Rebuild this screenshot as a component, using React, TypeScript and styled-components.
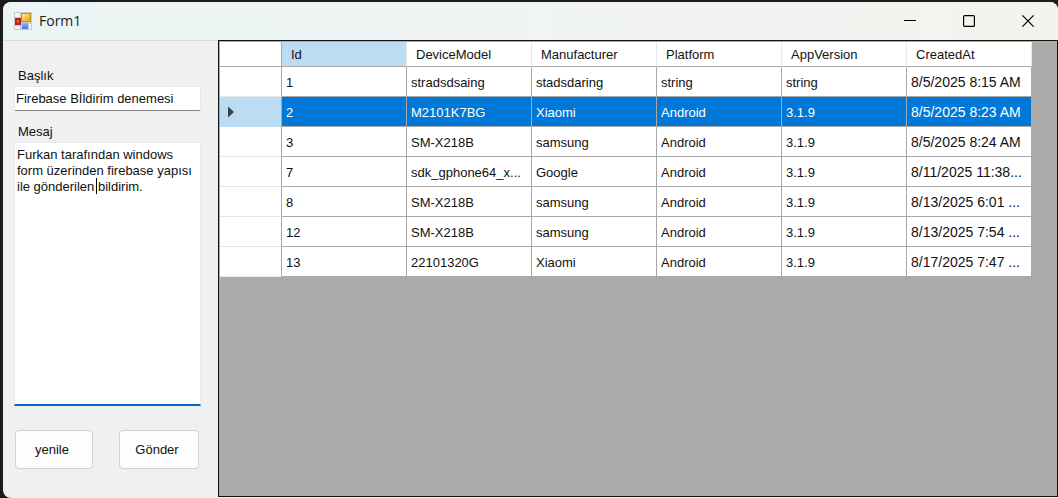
import React, { useState } from "react";
import styled, { createGlobalStyle } from "styled-components";

const GlobalStyle = createGlobalStyle`
  * { box-sizing: border-box; }
  body {
    margin: 0;
    background: #1d1b1c;
    font-family: "Liberation Sans", Arial, sans-serif;
    font-size: 13px;
    color: #111;
  }
  button, input, textarea { font: inherit; color: inherit; }
`;

const Desktop = styled.div`
  display: flex;
  min-height: 100vh;
  padding: 2px 0 0 3px;
`;

const Window = styled.div`
  display: flex;
  flex-direction: column;
  flex: 1;
  min-width: 0;
  overflow: hidden;
  border-radius: 8px;
  border-bottom-right-radius: 0;
  background: #f0f0f0;
`;

const TitleBar = styled.header`
  display: flex;
  align-items: center;
  height: 38px;
  padding: 0 1px 0 11px;
  background: linear-gradient(90deg, #ebf5f5, #f0f4f3 50%, #f4f3ee);
`;

const Title = styled.h1`
  flex: 1;
  margin: 0 0 0 7px;
  font: 400 14px/20px "Open Sans", "Noto Sans", sans-serif;
  color: #1a1a1a;
`;

const CaptionButton = styled.button`
  display: grid;
  place-items: center;
  width: 59px;
  height: 38px;
  padding: 0;
  border: 0;
  background: transparent;
`;

const Body = styled.div`
  display: flex;
  flex: 1;
  min-height: 0;
`;

const Sidebar = styled.form`
  display: flex;
  flex-direction: column;
  width: 215px;
  flex: none;
  padding: 27px 17px 29px 11px;
  border-top: 1px solid #d9dcdc;
`;

const Label = styled.label`
  padding-left: 4px;
  line-height: 16px;
`;

const TextBox = styled.input`
  width: 100%;
  height: 25px;
  margin: 2px 0 13px;
  padding: 0 1px;
  border: 1px solid #e6e8ea;
  border-bottom-color: #868686;
  border-radius: 2px;
  background: #fff;
  outline: 0;
`;

const MessageWrap = styled.div`
  position: relative;
  display: flex;
  flex: 1;
  min-height: 120px;
  margin: 2px 0 24px;
`;

const MessageBox = styled.textarea`
  flex: 1;
  min-width: 0;
  padding: 4px 2px;
  border: 1px solid #e6ebef;
  border-bottom: 2px solid #0067c0;
  background: #fff;
  line-height: 16px;
  white-space: pre;
  overflow: hidden;
  resize: none;
  outline: 0;
`;

const Caret = styled.span`
  position: absolute;
  left: 82px;
  top: 36px;
  width: 1px;
  height: 16px;
  background: #000;
`;

const Actions = styled.div`
  display: flex;
  justify-content: space-between;
  padding: 0 2px 0 1px;
`;

const PushButton = styled.button<{ $width: number }>`
  width: ${(p) => p.$width}px;
  height: 39px;
  padding: 0 4px 0 0;
  border: 1px solid #d0d0d0;
  border-radius: 4px;
  background: #fdfdfd;
`;

const GridPane = styled.main`
  flex: 1;
  min-width: 0;
  margin-bottom: 1px;
  padding: 1px 0 0 1px;
  border: 1px solid #111;
  background: #ababab;
`;

const Table = styled.table`
  table-layout: fixed;
  width: 812px;
  border-spacing: 0;
  background: #fff;
`;

const Col = styled.col<{ $w: number }>`
  width: ${(p) => p.$w}px;
`;

const HeadCell = styled.th<{ $active?: boolean }>`
  height: 25px;
  padding: 0 0 0 9px;
  border-right: 1px solid #e8e8e8;
  border-bottom: 1px solid #a8a8a8;
  background: ${(p) => (p.$active ? "#bcdcf4" : "#fff")};
  font-weight: 400;
  text-align: left;
`;

const CornerCell = styled.td`
  border-right: 1px solid #a8a8a8;
  border-bottom: 1px solid #a8a8a8;
`;

const RowHead = styled.th<{ $active?: boolean }>`
  height: 30px;
  padding: 0 0 0 7px;
  border-right: 1px solid #a8a8a8;
  border-bottom: 1px solid ${(p) => (p.$active ? "#bcdcf4" : "#e8e8e8")};
  background: ${(p) => (p.$active ? "#bcdcf4" : "#fff")};
  text-align: left;

  svg { display: block; }
`;

const Cell = styled.td<{ $active?: boolean; $date?: boolean }>`
  height: 30px;
  padding: 1px 0 0 4px;
  border-right: 1px solid #a8a8a8;
  border-bottom: 1px solid #a8a8a8;
  background: ${(p) => (p.$active ? "#0078d7" : "#fff")};
  color: ${(p) => (p.$active ? "#fff" : "#111")};
  font-size: ${(p) => (p.$date ? 14 : 13)}px;
  white-space: nowrap;
  overflow: hidden;
`;

const columns = ["Id", "DeviceModel", "Manufacturer", "Platform", "AppVersion", "CreatedAt"];

const rows = [
  ["1", "stradsdsaing", "stadsdaring", "string", "string", "8/5/2025 8:15 AM"],
  ["2", "M2101K7BG", "Xiaomi", "Android", "3.1.9", "8/5/2025 8:23 AM"],
  ["3", "SM-X218B", "samsung", "Android", "3.1.9", "8/5/2025 8:24 AM"],
  ["7", "sdk_gphone64_x...", "Google", "Android", "3.1.9", "8/11/2025 11:38..."],
  ["8", "SM-X218B", "samsung", "Android", "3.1.9", "8/13/2025 6:01 ..."],
  ["12", "SM-X218B", "samsung", "Android", "3.1.9", "8/13/2025 7:54 ..."],
  ["13", "22101320G", "Xiaomi", "Android", "3.1.9", "8/17/2025 7:47 ..."],
];

const FormIcon = () => (
  <svg width="18" height="18" viewBox="0 0 18 18" aria-hidden="true">
    <defs>
      <linearGradient id="gold" x1="0" y1="0" x2="1" y2="1">
        <stop offset="0" stopColor="#ffe98a" />
        <stop offset="1" stopColor="#e8a80c" />
      </linearGradient>
      <linearGradient id="blue" x1="0" y1="0" x2="0" y2="1">
        <stop offset="0" stopColor="#8db9ff" />
        <stop offset="1" stopColor="#3f78dc" />
      </linearGradient>
    </defs>
    <rect width="18" height="18" fill="#c9cbcb" />
    <path d="M1 1h5v4H1zM1 14h5v3H1zM15 12h2v5h-2z" fill="#f4f6f6" />
    <rect x="1" y="6" width="6" height="7" fill="#b3261c" />
    <rect x="3" y="8" width="2" height="3" fill="#e0685a" />
    <rect x="7" y="1" width="10" height="9" fill="#c2921c" />
    <rect x="8" y="2" width="8" height="7" fill="url(#gold)" />
    <rect x="8" y="11" width="6" height="6" fill="url(#blue)" />
  </svg>
);

export default function App() {
  const [title, setTitle] = useState("Firebase Bİldirim denemesi");
  const [message, setMessage] = useState(
    "Furkan tarafından windows\nform üzerinden firebase yapısı\nile gönderilen bildirim."
  );
  const [selected, setSelected] = useState(1);

  return (
    <Desktop>
      <GlobalStyle />
      <Window>
        <TitleBar>
          <FormIcon />
          <Title>Form1</Title>
          <CaptionButton aria-label="Minimize">
            <svg width="12" height="12" viewBox="0 0 12 12" stroke="#000">
              <path d="M0 5.5h12" />
            </svg>
          </CaptionButton>
          <CaptionButton aria-label="Maximize">
            <svg width="12" height="12" viewBox="0 0 12 12" fill="none" stroke="#000" strokeWidth="1.2">
              <rect x="0.6" y="0.6" width="10.8" height="10.8" rx="1" />
            </svg>
          </CaptionButton>
          <CaptionButton aria-label="Close">
            <svg width="12" height="12" viewBox="0 0 12 12" stroke="#000" strokeWidth="1.2">
              <path d="M0.4 0.4l11.2 11.2M11.6 0.4L0.4 11.6" />
            </svg>
          </CaptionButton>
        </TitleBar>
        <Body>
          <Sidebar onSubmit={(e) => e.preventDefault()}>
            <Label htmlFor="title">Başlık</Label>
            <TextBox id="title" value={title} onChange={(e) => setTitle(e.target.value)} />
            <Label htmlFor="message">Mesaj</Label>
            <MessageWrap>
              <MessageBox
                id="message"
                spellCheck={false}
                value={message}
                onChange={(e) => setMessage(e.target.value)}
              />
              <Caret />
            </MessageWrap>
            <Actions>
              <PushButton type="button" $width={78}>yenile</PushButton>
              <PushButton type="submit" $width={80}>Gönder</PushButton>
            </Actions>
          </Sidebar>
          <GridPane>
            <Table>
              <colgroup>
                <Col $w={62} />
                {columns.map((c) => (
                  <Col key={c} $w={125} />
                ))}
              </colgroup>
              <thead>
                <tr>
                  <CornerCell />
                  {columns.map((c, i) => (
                    <HeadCell key={c} scope="col" $active={i === 0}>
                      {c}
                    </HeadCell>
                  ))}
                </tr>
              </thead>
              <tbody>
                {rows.map((row, r) => (
                  <tr key={row[0]} onClick={() => setSelected(r)}>
                    <RowHead scope="row" $active={r === selected}>
                      {r === selected && (
                        <svg width="8" height="12" viewBox="0 0 8 12" aria-label="Current row">
                          <path d="M1 0.5L7 6L1 11.5z" fill="#404040" />
                        </svg>
                      )}
                    </RowHead>
                    {row.map((value, c) => (
                      <Cell key={c} $active={r === selected} $date={c === 5}>
                        {value}
                      </Cell>
                    ))}
                  </tr>
                ))}
              </tbody>
            </Table>
          </GridPane>
        </Body>
      </Window>
    </Desktop>
  );
}
